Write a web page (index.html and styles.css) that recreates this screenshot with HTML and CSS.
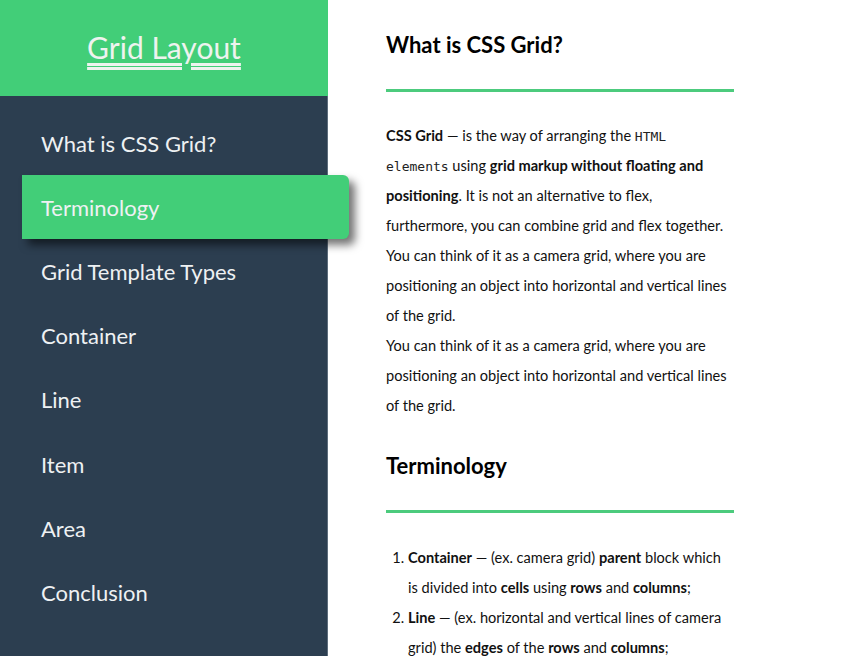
FILE: index.html
```html
<!DOCTYPE html>
<html lang="en">
<head>
<meta charset="utf-8">
<title>Grid Layout</title>
<link rel="stylesheet" href="styles.css">
</head>
<body>
<div class="page">
  <aside class="sidebar">
    <header class="brand">
      <a class="brand-link" href="#">Grid Layout</a>
    </header>
    <nav class="nav">
      <a class="nav-item" href="#">What is CSS Grid?</a>
      <a class="nav-item active" href="#">Terminology</a>
      <a class="nav-item" href="#">Grid Template Types</a>
      <a class="nav-item" href="#">Container</a>
      <a class="nav-item" href="#">Line</a>
      <a class="nav-item" href="#">Item</a>
      <a class="nav-item" href="#">Area</a>
      <a class="nav-item" href="#">Conclusion</a>
    </nav>
  </aside>
  <main class="content">
    <section class="section">
      <h2 class="section-title">What is CSS Grid?</h2>
      <hr class="rule">
      <p class="text"><b>CSS Grid</b> — is the way of arranging the <code>HTML elements</code> using <b>grid markup without floating and positioning</b>. It is not an alternative to flex, furthermore, you can combine grid and flex together.<br>You can think of it as a camera grid, where you are positioning an object into horizontal and vertical lines of the grid.<br>You can think of it as a camera grid, where you are positioning an object into horizontal and vertical lines of the grid.</p>
    </section>
    <section class="section">
      <h2 class="section-title">Terminology</h2>
      <hr class="rule">
      <ol class="list">
        <li><b>Container</b> — (ex. camera grid) <b>parent</b> block which is divided into <b>cells</b> using <b>rows</b> and <b>columns</b>;</li>
        <li><b>Line</b> — (ex. horizontal and vertical lines of camera grid) the <b>edges</b> of the <b>rows</b> and <b>columns</b>;</li>
      </ol>
    </section>
  </main>
</div>
</body>
</html>
```
FILE: styles.css
```css
html, body {
  margin: 0;
  padding: 0;
  height: 100%;
  overflow: hidden;
}
body {
  font-family: Lato, "Open Sans", sans-serif;
  background: #fff;
  color: #111;
}
.page {
  display: grid;
  grid-template-columns: 328px 1fr;
  height: 656px;
}
.sidebar {
  background: #2c3e50;
  border-right: 1px solid #5d6d7c;
  display: flex;
  flex-direction: column;
  position: relative;
  z-index: 2;
}
.brand {
  height: 96px;
  background: #42ce78;
  margin-right: -1px;
  display: flex;
  align-items: center;
  justify-content: center;
}
.brand-link {
  color: #eef3ef;
  font-size: 30px;
  line-height: 36px;
  text-decoration: underline double;
  text-underline-offset: 4px;
  margin-bottom: 2px;
}
.nav {
  display: flex;
  flex-direction: column;
  padding-top: 15px;
}
.nav-item {
  display: flex;
  align-items: center;
  height: 64.2px;
  padding-left: 41px;
  color: #eef1f3;
  font-size: 22px;
  text-decoration: none;
}
.nav-item.active {
  background: #42ce78;
  margin-left: 22px;
  margin-right: -22px;
  padding-left: 19px;
  border-radius: 0 6px 6px 0;
  box-shadow: 6px 6px 9px rgba(0, 0, 0, 0.55);
}
.content {
  padding-left: 58px;
  width: 348px;
}
.section {
  padding-top: 32px;
}
.section-title {
  margin: 0;
  font-size: 22px;
  line-height: 26px;
  font-weight: 700;
  color: #000;
}
.rule {
  border: 0;
  height: 3px;
  background: #4ccb7d;
  margin: 31px 0 29px;
}
.text {
  margin: 0;
  font-size: 14.6px;
  line-height: 30px;
  color: #111;
}
.text code {
  font-family: "DejaVu Sans Mono", monospace;
  font-size: 13px;
  line-height: 0;
  color: #222;
}
.list {
  margin: 0;
  padding: 1px 0 0 22px;
  font-size: 14.6px;
  line-height: 30px;
  color: #111;
}
```
